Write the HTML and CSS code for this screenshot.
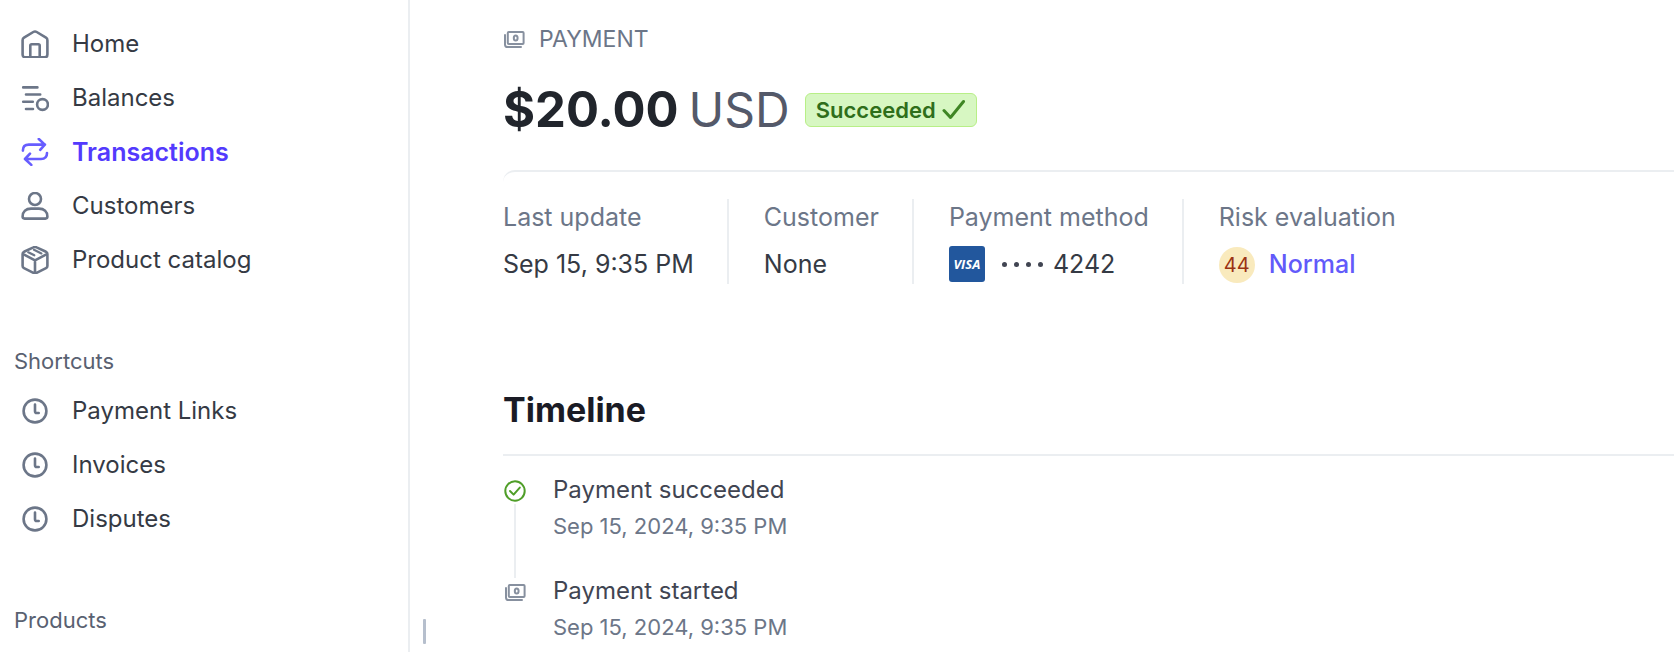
FILE: index.html
```html
<!DOCTYPE html>
<html lang="en">
<head>
<meta charset="utf-8">
<meta name="viewport" content="width=device-width, initial-scale=1">
<title>Payment</title>
<link rel="stylesheet" href="styles.css">
</head>
<body>
<svg class="sprite" aria-hidden="true">
  <symbol id="clock" viewBox="0 0 28 28"><circle cx="14" cy="14" r="11.4"/><path d="M14 7.600v6.600q0 1.800 1.800 1.800h1.900"/></symbol>
  <symbol id="cash" viewBox="0 0 22 22"><rect x="4.8" y="4" width="15.8" height="12" rx="1"/><path d="M2 7v9.4q0 2.6 2.6 2.6H18"/><ellipse cx="12.7" cy="10" rx="1.9" ry="2.5"/></symbol>
</svg>
<div class="app">
  <aside class="sidebar">
    <nav>
      <ul class="nav">
        <li><a class="nav-link" href="#"><svg class="icon" viewBox="0 0 28 28"><path d="M1.600 10.200Q1.600 8.600 3 7.700L12.300 2Q14 1 15.700 2L25 7.700q1.400.9 1.400 2.500V24.400q0 3-3 3H4.600q-3 0-3-3zM9.300 27V15.700q0-1.400 1.400-1.400h6.600q1.400 0 1.400 1.400V27"/></svg>Home</a></li>
        <li><a class="nav-link" href="#"><svg class="icon" viewBox="0 0 28 28"><path d="M2.200 3.400h14.200M5 10.500h14.200M2.200 17.700h9.600M5 25h7"/><circle cx="21.500" cy="20.500" r="5.400"/></svg>Balances</a></li>
        <li><a class="nav-link active" href="#" aria-current="page"><svg class="icon" viewBox="0 0 28 28"><path d="M1.900 12.600q0-6 6-6H24M17.800 1l6 5.600-4.600 5.200M26 15q0 6-6 6H4.200M9 15.600L4 21l6.300 5.900"/></svg>Transactions</a></li>
        <li><a class="nav-link" href="#"><svg class="icon" viewBox="0 0 28 28"><circle cx="14" cy="7" r="6"/><path d="M1.600 24.600C1.600 19.600 5 16.600 10 16.600h8c5 0 8.400 3 8.400 8q0 2-2 2H3.600q-2 0-2-2z"/></svg>Customers</a></li>
        <li><a class="nav-link" href="#"><svg class="icon" viewBox="0 0 28 28"><path d="M12.400 1.400q1.600-.8 3.200 0L25 5.800q1.400.7 1.400 2.200v12q0 1.500-1.400 2.200l-9.400 4.600q-1.600.8-3.200 0L3 22.200q-1.400-.7-1.400-2.200V8Q1.600 6.500 3 5.800zM2.200 8.200L14 14.400l11.800-6.200M14 14.400V27"/><path stroke-width="2.200" d="M7.300 6.300l6 3M13 3.800l7.400 3.600"/></svg>Product catalog</a></li>
      </ul>
      <h2 class="nav-title">Shortcuts</h2>
      <ul class="nav">
        <li><a class="nav-link" href="#"><svg class="icon"><use href="#clock"/></svg>Payment Links</a></li>
        <li><a class="nav-link" href="#"><svg class="icon"><use href="#clock"/></svg>Invoices</a></li>
        <li><a class="nav-link" href="#"><svg class="icon"><use href="#clock"/></svg>Disputes</a></li>
      </ul>
      <h2 class="nav-title">Products</h2>
    </nav>
  </aside>
  <main class="main">
    <div class="eyebrow"><svg class="icon-small"><use href="#cash"/></svg>PAYMENT</div>
    <div class="headline">
      <h1 class="amount">$20.00<span class="currency">USD</span></h1>
      <span class="badge">Succeeded<svg class="badge-icon" viewBox="0 0 24 22"><path d="M2 11.500l6.500 7L21.500 2.500"/></svg></span>
    </div>
    <dl class="facts">
      <div class="fact"><dt>Last update</dt><dd>Sep 15, 9:35 PM</dd></div>
      <div class="fact"><dt>Customer</dt><dd>None</dd></div>
      <div class="fact"><dt>Payment method</dt><dd><span class="visa">VISA</span><span class="dots" aria-hidden="true"><i></i><i></i><i></i><i></i></span>4242</dd></div>
      <div class="fact"><dt>Risk evaluation</dt><dd><span class="score">44</span><a class="risk" href="#">Normal</a></dd></div>
    </dl>
    <h2 class="section-title">Timeline</h2>
    <ol class="timeline">
      <li class="event">
        <div class="rail"><svg class="icon-small done" viewBox="0 0 22 22"><circle cx="11" cy="11" r="9.700"/><path d="M6 11l3.600 3.600L15.800 7.600"/></svg></div>
        <div><p class="event-name">Payment succeeded</p><p class="event-time">Sep 15, 2024, 9:35 PM</p></div>
      </li>
      <li class="event">
        <div class="rail"><svg class="icon-small"><use href="#cash"/></svg></div>
        <div><p class="event-name">Payment started</p><p class="event-time">Sep 15, 2024, 9:35 PM</p></div>
      </li>
    </ol>
    <button class="handle" type="button" aria-label="Resize sidebar"></button>
  </main>
</div>
</body>
</html>
```
FILE: styles.css
```css
* { box-sizing: border-box; }

body {
  margin: 0;
  background: #fff;
  color: #353a44;
  font-family: Inter, "Liberation Sans", sans-serif;
  font-size: 24px;
  line-height: 32px;
}

h1, h2, p, ul, ol, dl, dd { margin: 0; padding: 0; }
ul, ol { list-style: none; }
a { color: inherit; text-decoration: none; }
svg { flex: none; fill: none; stroke: currentColor; stroke-linecap: round; stroke-linejoin: round; }

.sprite { position: absolute; width: 0; height: 0; }
.app { display: flex; min-height: 100vh; }

.sidebar {
  flex: 0 0 410px;
  padding: 17px 14px 8px;
  border-right: 2px solid #ebeef1;
}

.nav-link {
  display: flex;
  align-items: center;
  gap: 23px;
  height: 54px;
  padding-left: 7px;
}
.icon { width: 28px; height: 28px; stroke-width: 2.6; color: #6c7688; }
.active { color: #533afd; font-size: 25px; font-weight: 600; }
.active .icon { color: #675dff; }

.nav-title {
  margin-top: 58px;
  margin-bottom: 7px;
  color: #596171;
  font-size: 22px;
  font-weight: 400;
}

.main { position: relative; flex: 1; min-width: 0; padding: 23px 0 0 93px; }

.eyebrow { display: flex; align-items: center; gap: 14px; color: #6c7688; font-size: 23px; }
.icon-small { width: 22px; height: 22px; stroke-width: 2; color: #87909f; }

.headline { display: flex; align-items: center; gap: 15px; margin-top: 25px; }
.amount { color: #21252c; font-size: 49px; font-weight: 700; line-height: 60px; }
.currency { margin-left: 10px; color: #545969; font-size: 48px; font-weight: 400; }
.badge {
  display: flex;
  align-items: center;
  gap: 6px;
  height: 34px;
  padding: 0 10px;
  border: 1px solid #b8ef87;
  border-radius: 6px;
  background: #d7f7c2;
  color: #2f6e1b;
  font-size: 22px;
  font-weight: 600;
}
.badge-icon { width: 24px; height: 22px; stroke-width: 3; color: #3f8624; }

.facts {
  display: flex;
  margin-top: 30px;
  padding-top: 27px;
  border-top: 2px solid #ebeef1;
  border-top-left-radius: 12px;
  font-size: 25px;
}
.fact { height: 85px; padding: 2px 33px 0 35px; border-right: 2px solid #ebeef1; }
.fact:first-child { padding-left: 0; }
.fact:last-child { border-right: 0; }
.fact dt { color: #6c7688; }
.fact dd { display: flex; align-items: center; height: 36px; margin-top: 13px; }
.visa {
  display: grid;
  place-items: center;
  width: 36px;
  height: 36px;
  margin-right: 17px;
  border-radius: 3px;
  background: #22579d;
  color: #fff;
  font: italic 700 13px/13px "Open Sans", sans-serif;
}
.dots { display: flex; gap: 7px; margin-right: 10px; }
.dots i { width: 5px; height: 5px; border-radius: 50%; background: #414552; }
.score {
  display: grid;
  place-items: center;
  width: 36px;
  height: 36px;
  margin: 2px 14px 0 0;
  border-radius: 50%;
  background: #f9eabd;
  color: #9b3313;
  font-size: 20px;
}
.risk { color: #625afa; font-weight: 500; }

.section-title {
  margin-top: 103px;
  padding-bottom: 21px;
  border-bottom: 2px solid #ebeef1;
  color: #1a1b25;
  font-size: 34px;
  font-weight: 700;
  line-height: 46px;
}

.timeline { padding-top: 18px; }
.event { display: flex; gap: 27px; padding-bottom: 33px; color: #414552; }
.event:last-child { padding-bottom: 0; }
.rail { display: flex; flex-direction: column; align-items: center; width: 23px; padding-top: 6px; }
.event:not(:last-child) .rail { margin-bottom: -36px; }
.event:not(:last-child) .rail::after { content: ""; flex: 1; width: 2px; margin-top: 2px; background: #ebeef1; }
.done { color: #4f9e28; }
.event-time { margin-top: 4px; color: #6c7688; font-size: 22px; }

.handle {
  position: absolute;
  left: 13px;
  bottom: 8px;
  width: 3px;
  height: 25px;
  padding: 0;
  border: 0;
  border-radius: 1px;
  background: #b6bfcd;
}
```
